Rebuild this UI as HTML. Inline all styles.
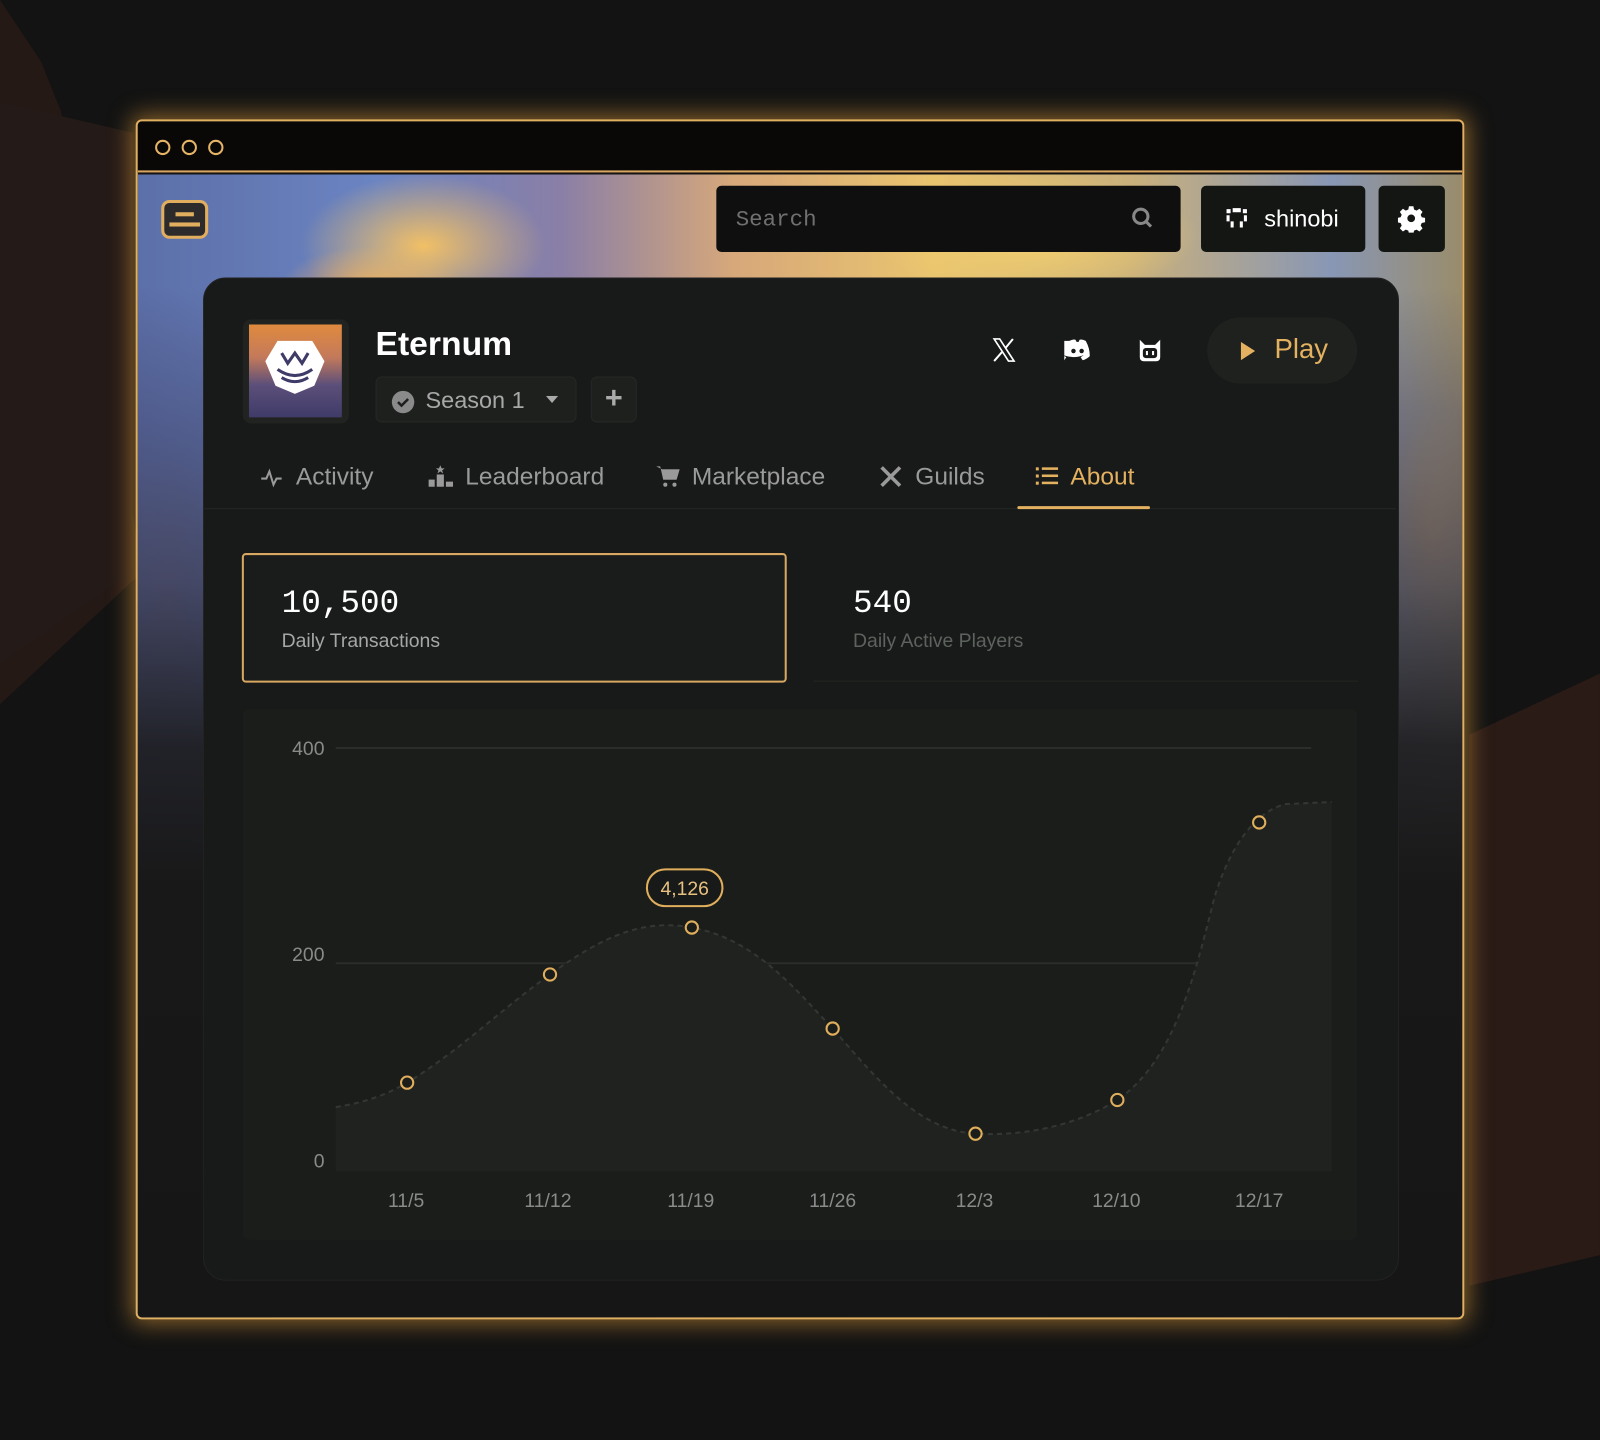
<!DOCTYPE html>
<html><head><meta charset="utf-8"><style>
*{box-sizing:border-box;margin:0;padding:0}
html,body{width:1600px;height:1440px;overflow:hidden;background:#131313;font-family:"Liberation Sans",sans-serif}
#s{position:absolute;left:0;top:0;width:1568px;height:1411px;transform:scale(1.020408);transform-origin:0 0}
.a{position:absolute}
.mono{font-family:"Liberation Mono",monospace}
</style></head><body><div id="s">
<svg class="a" style="left:0;top:0" width="1568" height="1411">
<polygon points="0,0 40,60 60,110 140,560 0,690" fill="#2a1c18" opacity=".8"/>
<polygon points="0,100 130,130 130,560 0,650" fill="#241a17"/>
<polygon points="1568,660 1440,720 1440,1260 1568,1230" fill="#2a1b17"/>
</svg>
<div class="a" style="left:133px;top:117px;width:1302px;height:1176px;border:2px solid #e0b060;border-radius:6px;background:#141414;box-shadow:0 0 22px 4px rgba(230,160,60,.55);overflow:hidden">
 <div class="a" style="left:0;top:0;width:1300px;height:50px;background:#0a0807;border-bottom:2px solid #d8a660"></div>
 <div class="a" style="left:17px;top:18px;width:15px;height:15px;border:2px solid #e6b466;border-radius:50%"></div>
 <div class="a" style="left:43px;top:18px;width:15px;height:15px;border:2px solid #e6b466;border-radius:50%"></div>
 <div class="a" style="left:69px;top:18px;width:15px;height:15px;border:2px solid #e6b466;border-radius:50%"></div>
 <div class="a" style="left:0;top:52px;width:1300px;height:1122px;background:linear-gradient(90deg,#5c6fa8 0%,#6b84c2 18%,#8a7fa6 32%,#d7a87a 45%,#e9c46f 60%,#c9b07c 75%,#8897b5 90%,#9a8c6a 100%)"></div>
 <div class="a" style="left:0;top:52px;width:1300px;height:1122px;background:radial-gradient(ellipse 120px 70px at 280px 70px,#f2c065,transparent),radial-gradient(ellipse 160px 60px at 880px 60px,#f3d06e,transparent),radial-gradient(ellipse 90px 40px at 230px 110px,#e7a860 ,transparent),radial-gradient(ellipse 60px 160px at 30px 420px,#6a6f9a,transparent),radial-gradient(ellipse 50px 120px at 1270px 350px,#b09870,transparent)"></div>
 <div class="a" style="left:0;top:52px;width:1300px;height:1122px;background:linear-gradient(180deg,transparent 0,transparent 110px,rgba(60,60,95,.35) 230px,rgba(50,50,70,.65) 400px,rgba(30,30,34,.95) 560px,#181818 700px,#161616 1122px)"></div>
 <div class="a" style="left:23px;top:77px;width:46px;height:38px;border:3px solid #e1ae5f;border-radius:8px;background:#2c2a2a"><div class="a" style="left:11px;top:9px;width:18px;height:4px;background:#e1ae5f"></div><div class="a" style="left:5px;top:19px;width:30px;height:4px;background:#e1ae5f"></div></div>
 <div class="a" style="left:567px;top:63px;width:455px;height:65px;background:#0f0f0f;border-radius:5px;color:#707070;font-size:22px;padding:19px 19px" ><span class="mono">Search</span>
  <svg class="a" style="left:406px;top:20px" width="24" height="24" viewBox="0 0 24 24"><circle cx="10" cy="10" r="7" stroke="#888" stroke-width="3" fill="none"/><path d="M15 15l5 5" stroke="#888" stroke-width="3"/></svg></div>
 <div class="a" style="left:1042px;top:63px;width:161px;height:65px;background:#141614;border-radius:5px;color:#fff;font-size:23px;padding:19px 0 0 62px">shinobi
  <svg class="a" style="left:23px;top:20px" width="24" height="24" viewBox="0 0 24 24"><path d="M2 3h4v4H2zM18 3h4v4h-4zM8 2h8v4H8zM2 9h3v6H2zM19 9h3v6h-3zM6 15h3v6H6zM15 15h3v6h-3z" fill="#fff"/></svg></div>
 <div class="a" style="left:1216px;top:63px;width:65px;height:65px;background:#141614;border-radius:5px"><svg class="a" style="left:19px;top:19px" width="27" height="27" viewBox="0 0 24 24"><path fill="#fff" d="M10 1h4l.6 3 2.3 1 2.6-1.7 2.8 2.8L20.6 8.7l1 2.3 3 .6v4l-3 .6-1 2.3 1.7 2.6-2.8 2.8-2.6-1.7-2.3 1-.6 3h-4l-.6-3-2.3-1-2.6 1.7-2.8-2.8 1.7-2.6-1-2.3-3-.6v-4l3-.6 1-2.3L1.7 6.1 4.5 3.3l2.6 1.7 2.3-1zM12 8.5a3.5 3.5 0 100 7 3.5 3.5 0 000-7z" transform="scale(.96)"/></svg></div>
 <div class="a" style="left:64px;top:153px;width:1172px;height:983px;background:#171a18;border-radius:22px;border:1px solid #222"></div>
</div>
<div class="a" style="left:238px;top:313px;width:104px;height:102px;background:#202320;border-radius:8px"></div>
<div class="a" style="left:244px;top:318px;width:91px;height:91px;background:linear-gradient(180deg,#e08a3e 0%,#c47a5a 35%,#5c4f7a 65%,#3f3b68 100%)"><svg class="a" style="left:14px;top:14px" width="62" height="56" viewBox="0 0 62 56"><polygon points="14,2 48,2 60,22 50,46 31,54 12,46 2,22" fill="#fff"/><path d="M18 14l6 10 7-10 7 10 6-10M14 30q17 12 34 0M18 38q13 8 26 0" stroke="#3f3b68" stroke-width="3" fill="none"/></svg></div>
<div class="a" style="left:368px;top:318px;color:#fff;font-size:33px;font-weight:bold">Eternum</div>
<div class="a" style="left:368px;top:369px;width:197px;height:45px;background:#1d201d;border:1px solid #252825;border-radius:6px;color:#a8a8a8;font-size:23px;padding:9px 0 0 48px">Season 1
 <svg class="a" style="left:14px;top:12px" width="24" height="24" viewBox="0 0 24 24"><circle cx="12" cy="12" r="11" fill="#8a8a8a"/><path d="M7 12l3.5 3.5L17 9" stroke="#1d201d" stroke-width="2.5" fill="none"/></svg>
 <svg class="a" style="left:166px;top:18px" width="12" height="8"><path d="M0 0h12L6 7z" fill="#aaa"/></svg></div>
<div class="a" style="left:579px;top:369px;width:45px;height:45px;background:#1d201d;border:1px solid #252825;border-radius:6px;color:#aaa;font-size:30px;text-align:center;line-height:42px;font-weight:bold">+</div>
<svg class="a" style="left:971px;top:330px" width="26" height="26" viewBox="0 0 24 24"><path d="M3 2h5l13 20h-5z" stroke="#fff" stroke-width="1.5" fill="none"/><path d="M20 2L13.5 10M3 22l7-8" stroke="#fff" stroke-width="1.8"/></svg>
<svg class="a" style="left:1043px;top:332px" width="26" height="22" viewBox="0 0 26 22"><path d="M5 2q4-2 6-1l1 2h2l1-2q2-1 6 1 4 7 4 15-3 3-7 4l-2-3q2-1 3-2-5 2-10 2-5 0-10-2 1 1 3 2l-2 3q-4-1-7-4 0-8 4-15z" fill="#fff"/><circle cx="9" cy="12" r="2.2" fill="#171a18"/><circle cx="17" cy="12" r="2.2" fill="#171a18"/></svg>
<svg class="a" style="left:1114px;top:330px" width="26" height="26" viewBox="0 0 26 26"><path d="M3 3l5 5h10l5-5v17q0 4-4 4H7q-4 0-4-4z" fill="#fff"/><rect x="6" y="11" width="14" height="10" rx="3" fill="#171a18"/><rect x="9" y="14" width="2" height="4" fill="#fff"/><rect x="15" y="14" width="2" height="4" fill="#fff"/></svg>
<div class="a" style="left:1183px;top:311px;width:147px;height:65px;background:#1e211e;border-radius:33px;color:#e4b160;font-size:27px;padding:16px 0 0 66px">Play<svg class="a" style="left:33px;top:24px" width="14" height="18"><path d="M0 0l14 9-14 9z" fill="#e4b160"/></svg></div>
<div class="a" style="left:200px;top:498px;width:1168px;height:1px;background:#242724"></div>
<div class="a" style="left:290px;top:454px;color:#9a9a9a;font-size:24px">Activity</div>
<svg class="a" style="left:255px;top:457px" width="22" height="22" viewBox="0 0 22 22"><path d="M1 12h5l3-7 4 13 3-6h5" stroke="#9a9a9a" stroke-width="2" fill="none"/></svg>
<div class="a" style="left:456px;top:454px;color:#9a9a9a;font-size:24px">Leaderboard</div>
<svg class="a" style="left:420px;top:456px" width="24" height="22" viewBox="0 0 24 22"><rect x="0" y="14" width="6" height="7" fill="#9a9a9a"/><rect x="8" y="9" width="7" height="12" fill="#9a9a9a"/><rect x="17" y="16" width="7" height="5" fill="#9a9a9a"/><path d="M11.5 0l1.3 3h3l-2.5 2 1 3-2.8-2-2.8 2 1-3-2.5-2h3z" fill="#9a9a9a"/></svg>
<div class="a" style="left:678px;top:454px;color:#9a9a9a;font-size:24px">Marketplace</div>
<svg class="a" style="left:643px;top:455px" width="24" height="24" viewBox="0 0 24 24"><path d="M0 2h4l3 13h13l3-10H6" fill="#9a9a9a"/><path d="M5 5h18l-3 10H7z" fill="#9a9a9a"/><circle cx="9" cy="20" r="2" fill="#9a9a9a"/><circle cx="18" cy="20" r="2" fill="#9a9a9a"/></svg>
<div class="a" style="left:897px;top:454px;color:#9a9a9a;font-size:24px">Guilds</div>
<svg class="a" style="left:862px;top:456px" width="22" height="22" viewBox="0 0 22 22"><path d="M2 2l18 18M20 2L2 20" stroke="#9a9a9a" stroke-width="3.5"/></svg>
<div class="a" style="left:1049px;top:454px;color:#e4b160;font-size:24px">About</div>
<svg class="a" style="left:1015px;top:457px" width="22" height="20" viewBox="0 0 22 20"><g fill="#e4b160"><rect x="0" y="1" width="3" height="3"/><rect x="0" y="8" width="3" height="3"/><rect x="0" y="15" width="3" height="3"/><rect x="6" y="1" width="16" height="2.5"/><rect x="6" y="8" width="16" height="2.5"/><rect x="6" y="15" width="16" height="2.5"/></g></svg>
<div class="a" style="left:997px;top:496px;width:130px;height:3px;background:#e4b160;border-radius:2px"></div>
<div class="a" style="left:237px;top:542px;width:534px;height:127px;border:2px solid #d8a862;border-radius:4px;background:#191c1a"></div>
<div class="a mono" style="left:276px;top:573px;color:#fff;font-size:32px">10,500</div>
<div class="a" style="left:276px;top:618px;color:#a6a6a6;font-size:19px">Daily Transactions</div>
<div class="a" style="left:797px;top:667px;width:534px;height:1px;background:#242724"></div>
<div class="a mono" style="left:836px;top:573px;color:#fff;font-size:32px">540</div>
<div class="a" style="left:836px;top:618px;color:#5e625e;font-size:19px">Daily Active Players</div>
<div class="a" style="left:238px;top:695px;width:1092px;height:520px;background:#1a1d1a;border-radius:6px"></div>
<svg class="a" style="left:0;top:0" width="1568" height="1411" font-family="Liberation Sans" font-size="19" fill="#8a8a8a">
<line x1="329" y1="733" x2="1285" y2="733" stroke="#2a2d2a" stroke-width="2"/>
<line x1="329" y1="944" x2="1285" y2="944" stroke="#2a2d2a" stroke-width="2"/>
<text x="318" y="740" text-anchor="end">400</text><text x="318" y="942" text-anchor="end">200</text><text x="318" y="1144" text-anchor="end">0</text>
<path d="M329 1085 C360 1080,380 1072,399 1061 C450 1030,490 990,539 955 C590 918,630 900,678 909 C740 920,780 970,816 1008 C860 1058,900 1108,956 1111 C1010 1114,1060 1100,1095 1078 C1150 1040,1170 960,1190 880 C1205 830,1230 795,1260 788 L1305 786 L1305 1148 L329 1148 Z" fill="#1f221f"/>
<path d="M329 1085 C360 1080,380 1072,399 1061 C450 1030,490 990,539 955 C590 918,630 900,678 909 C740 920,780 970,816 1008 C860 1058,900 1108,956 1111 C1010 1114,1060 1100,1095 1078 C1150 1040,1170 960,1190 880 C1205 830,1230 795,1260 788 L1305 786" fill="none" stroke="#333633" stroke-width="2" stroke-dasharray="5 4"/>
<g fill="#1a1d1a" stroke="#e0ae5c" stroke-width="2"><circle cx="399" cy="1061" r="6"/><circle cx="539" cy="955" r="6"/><circle cx="678" cy="909" r="6"/><circle cx="816" cy="1008" r="6"/><circle cx="956" cy="1111" r="6"/><circle cx="1095" cy="1078" r="6"/><circle cx="1234" cy="806" r="6"/></g>
<rect x="634" y="852" width="74" height="36" rx="18" fill="#171a18" stroke="#e0ae5c" stroke-width="2"/>
<text x="671" y="877" text-anchor="middle" fill="#e8c080" font-size="19">4,126</text>
<g text-anchor="middle"><text x="398" y="1183">11/5</text><text x="537" y="1183">11/12</text><text x="677" y="1183">11/19</text><text x="816" y="1183">11/26</text><text x="955" y="1183">12/3</text><text x="1094" y="1183">12/10</text><text x="1234" y="1183">12/17</text></g>
</svg>
</div></body></html>
